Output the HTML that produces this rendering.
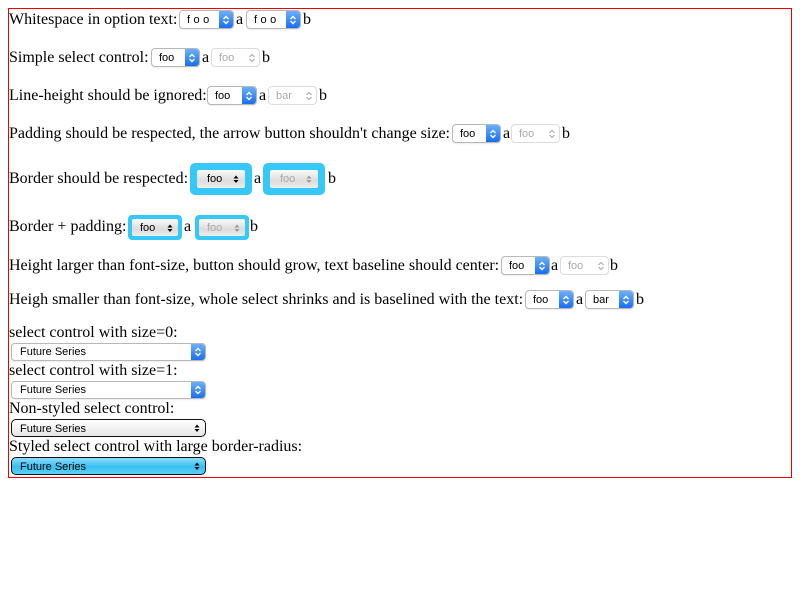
<!DOCTYPE html>
<html><head><meta charset="utf-8"><style>
body{margin:0;width:800px;height:600px;background:#fff;position:relative;font-family:"Liberation Serif",serif;font-size:16px;color:#000;overflow:hidden}
.frame{position:absolute;left:8px;top:8px;width:782px;height:468px;border:1px solid #e00}
.t{position:absolute;line-height:18px;white-space:nowrap;margin-top:1px}
.s{position:absolute;box-sizing:border-box;border:1px solid #b8b8b8;border-radius:4px;background:#fff;font-family:"Liberation Sans",sans-serif;font-size:11px;color:#000;overflow:hidden;box-shadow:0 1px 1px rgba(0,0,0,.08)}
.s span{position:absolute;left:7px;top:50%;transform:translateY(-50%);line-height:12px;white-space:nowrap}
.s .b{position:absolute;right:0;top:0;bottom:0;width:14px;background:linear-gradient(#6cb0fb,#1a6ef0);border-radius:0 3px 3px 0}
.s .b svg,.s .g svg{position:absolute;left:3px;top:50%;margin-top:-5px}
.s.d{border-color:#dcdcdc;color:#aaa;box-shadow:none}
.s .g{position:absolute;right:0;top:0;bottom:0;width:14px}
.cy{position:absolute;box-sizing:border-box;background:#36c8f8;border-radius:5px}
.gi{position:absolute;box-sizing:border-box;background:linear-gradient(#fafafa,#dcdcdc 60%,#eee);font-family:"Liberation Sans",sans-serif;font-size:11px;border-radius:2px}
.gi span{position:absolute;left:10px;top:50%;transform:translateY(-50%);line-height:12px}
.gi svg{position:absolute;right:6px;top:50%;margin-top:-4px}
.big{position:absolute;left:11px;width:195px;height:18px;box-sizing:border-box;font-family:"Liberation Sans",sans-serif;font-size:11px}
.big span{position:absolute;left:8px;top:2px;line-height:14px}
</style></head><body>
<div class="frame"></div>
<svg width="0" height="0" style="position:absolute"><defs>
<g id="ch"><path d="M1.5 4 L4 1.5 L6.5 4 M1.5 6 L4 8.5 L6.5 6" fill="none" stroke="#fff" stroke-width="1.4"/></g>
<g id="chd"><path d="M1.5 4 L4 1.5 L6.5 4 M1.5 6 L4 8.5 L6.5 6" fill="none" stroke="#aaa" stroke-width="1.1"/></g>
<g id="tr"><path d="M0.5 3.5 L3 0.5 L5.5 3.5Z M0.5 5 L3 8 L5.5 5Z" fill="#000"/></g>
<g id="trd"><path d="M0.5 3.5 L3 0.5 L5.5 3.5Z M0.5 5 L3 8 L5.5 5Z" fill="#999"/></g>
</defs></svg>

<!-- Row 1 -->
<div class="t" style="left:9px;top:10px">Whitespace in option text:</div>
<div class="s" style="left:179px;top:10px;width:55px;height:19px"><span style="letter-spacing:3.5px">foo</span><div class="b"><svg width="8" height="10"><use href="#ch"/></svg></div></div>
<div class="t" style="left:236px;top:10px">a</div>
<div class="s" style="left:246px;top:10px;width:55px;height:19px"><span style="letter-spacing:3.5px">foo</span><div class="b"><svg width="8" height="10"><use href="#ch"/></svg></div></div>
<div class="t" style="left:303px;top:10px">b</div>

<!-- Row 2 -->
<div class="t" style="left:9px;top:48px">Simple select control:</div>
<div class="s" style="left:151px;top:48px;width:49px;height:19px"><span>foo</span><div class="b"><svg width="8" height="10"><use href="#ch"/></svg></div></div>
<div class="t" style="left:202px;top:48px">a</div>
<div class="s d" style="left:211px;top:48px;width:49px;height:19px"><span>foo</span><div class="g"><svg width="8" height="10"><use href="#chd"/></svg></div></div>
<div class="t" style="left:262px;top:48px">b</div>

<!-- Row 3 -->
<div class="t" style="left:9px;top:86px">Line-height should be ignored:</div>
<div class="s" style="left:207px;top:86px;width:50px;height:19px"><span>foo</span><div class="b"><svg width="8" height="10"><use href="#ch"/></svg></div></div>
<div class="t" style="left:259px;top:86px">a</div>
<div class="s d" style="left:268px;top:86px;width:49px;height:19px"><span>bar</span><div class="g"><svg width="8" height="10"><use href="#chd"/></svg></div></div>
<div class="t" style="left:319px;top:86px">b</div>

<!-- Row 4 -->
<div class="t" style="left:9px;top:124px">Padding should be respected, the arrow button shouldn't change size:</div>
<div class="s" style="left:452px;top:124px;width:49px;height:19px"><span>foo</span><div class="b"><svg width="8" height="10"><use href="#ch"/></svg></div></div>
<div class="t" style="left:503px;top:124px">a</div>
<div class="s d" style="left:511px;top:124px;width:49px;height:19px"><span>foo</span><div class="g"><svg width="8" height="10"><use href="#chd"/></svg></div></div>
<div class="t" style="left:562px;top:124px">b</div>

<!-- Row 5 -->
<div class="t" style="left:9px;top:169px">Border should be respected:</div>
<div class="cy" style="left:190px;top:163px;width:62px;height:32px"></div>
<div class="gi" style="left:197px;top:170px;width:48px;height:18px"><span>foo</span><svg width="6" height="9"><use href="#tr"/></svg></div>
<div class="t" style="left:254px;top:169px">a</div>
<div class="cy" style="left:263px;top:163px;width:62px;height:32px"></div>
<div class="gi" style="left:270px;top:170px;width:48px;height:18px;color:#aaa"><span>foo</span><svg width="6" height="9"><use href="#trd"/></svg></div>
<div class="t" style="left:328px;top:169px">b</div>

<!-- Row 6 -->
<div class="t" style="left:9px;top:217px">Border + padding:</div>
<div class="cy" style="left:128px;top:215px;width:54px;height:25px;border-radius:4px"></div>
<div class="gi" style="left:132px;top:219px;width:46px;height:17px"><span style="left:8px">foo</span><svg width="6" height="9" style="right:5px"><use href="#tr"/></svg></div>
<div class="t" style="left:184px;top:217px">a</div>
<div class="cy" style="left:195px;top:215px;width:54px;height:25px;border-radius:4px"></div>
<div class="gi" style="left:199px;top:219px;width:46px;height:17px;color:#aaa"><span style="left:8px">foo</span><svg width="6" height="9" style="right:5px"><use href="#trd"/></svg></div>
<div class="t" style="left:250px;top:217px">b</div>

<!-- Row 7 -->
<div class="t" style="left:9px;top:256px">Height larger than font-size, button should grow, text baseline should center:</div>
<div class="s" style="left:501px;top:256px;width:49px;height:19px"><span>foo</span><div class="b"><svg width="8" height="10"><use href="#ch"/></svg></div></div>
<div class="t" style="left:551px;top:256px">a</div>
<div class="s d" style="left:560px;top:256px;width:49px;height:19px"><span>foo</span><div class="g"><svg width="8" height="10"><use href="#chd"/></svg></div></div>
<div class="t" style="left:610px;top:256px">b</div>

<!-- Row 8 -->
<div class="t" style="left:9px;top:290px">Heigh smaller than font-size, whole select shrinks and is baselined with the text:</div>
<div class="s" style="left:525px;top:290px;width:49px;height:19px"><span>foo</span><div class="b"><svg width="8" height="10"><use href="#ch"/></svg></div></div>
<div class="t" style="left:576px;top:290px">a</div>
<div class="s" style="left:585px;top:290px;width:49px;height:19px"><span>bar</span><div class="b"><svg width="8" height="10"><use href="#ch"/></svg></div></div>
<div class="t" style="left:636px;top:290px">b</div>

<!-- Bottom -->
<div class="t" style="left:9px;top:323px">select control with size=0:</div>
<div class="s" style="left:11px;top:343px;width:195px;height:18px"><span style="left:8px">Future Series</span><div class="b"><svg width="8" height="10"><use href="#ch"/></svg></div></div>
<div class="t" style="left:9px;top:361px">select control with size=1:</div>
<div class="s" style="left:11px;top:381px;width:195px;height:18px"><span style="left:8px">Future Series</span><div class="b"><svg width="8" height="10"><use href="#ch"/></svg></div></div>
<div class="t" style="left:9px;top:399px">Non-styled select control:</div>
<div class="big" style="top:419px;border:1px solid #111;border-radius:5px;background:linear-gradient(#fff,#e6e6e6)"><span>Future Series</span><svg width="6" height="9" style="position:absolute;right:5px;top:4px"><use href="#tr"/></svg></div>
<div class="t" style="left:9px;top:437px">Styled select control with large border-radius:</div>
<div class="big" style="top:457px;border:1px solid #111;border-radius:5px;background:linear-gradient(#8fdcfb,#36c0f0 55%,#5ed0f8)"><span>Future Series</span><svg width="6" height="9" style="position:absolute;right:5px;top:4px"><use href="#tr"/></svg></div>
</body></html>
